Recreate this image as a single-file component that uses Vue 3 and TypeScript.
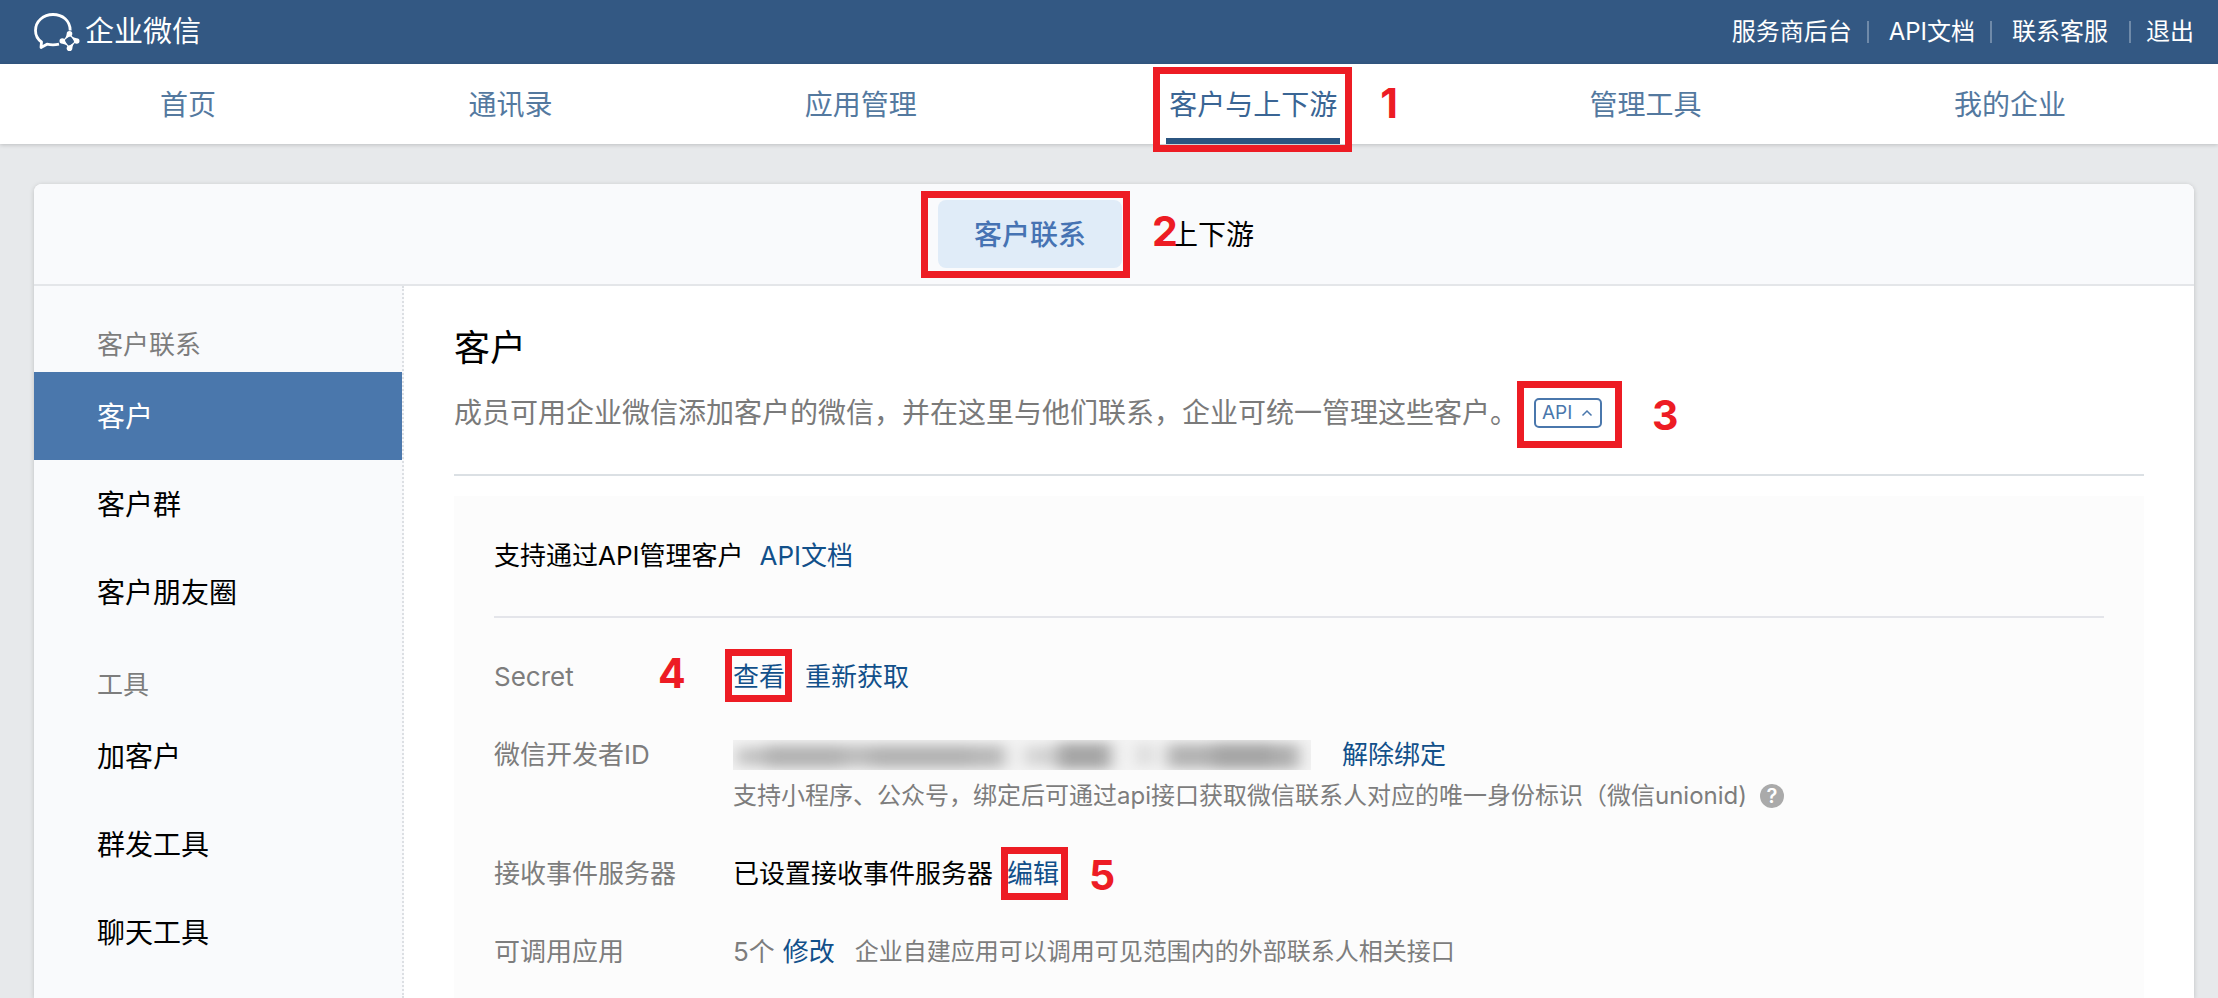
<script setup lang="ts">
interface Link {
  label: string
  active?: boolean
}

interface SideGroup {
  title: string
  items: Link[]
}

const topLinks: string[] = ['服务商后台', 'API文档', '联系客服', '退出']

const navItems: Link[] = [
  { label: '首页' },
  { label: '通讯录' },
  { label: '应用管理' },
  { label: '客户与上下游', active: true },
  { label: '管理工具' },
  { label: '我的企业' },
]

const sideGroups: SideGroup[] = [
  {
    title: '客户联系',
    items: [{ label: '客户', active: true }, { label: '客户群' }, { label: '客户朋友圈' }],
  },
  {
    title: '工具',
    items: [{ label: '加客户' }, { label: '群发工具' }, { label: '聊天工具' }],
  },
]
</script>

<template>
  <div class="page">
    <header class="topbar">
      <a class="brand" href="#">
        <svg class="brand-icon" viewBox="0 0 46 42" aria-hidden="true">
          <path
            d="M36.200 19.500C36.200 9.500 28.500 3.500 19 3.500S1.500 10 1.500 19.500C1.500 24.500 4 28.500 7.500 31L7 36.500L13 33.200C17 34 21 34 25 33.200"
            fill="none"
            stroke="#fff"
            stroke-width="2.800"
            stroke-linejoin="round"
          />
          <path d="M35.500 23.500L42 30L35.500 36.500L29 30Z" fill="none" stroke="#fff" stroke-width="1.200" />
          <g fill="#fff">
            <circle cx="35.500" cy="22.800" r="2.800" />
            <circle cx="42.700" cy="30" r="2.800" />
            <circle cx="35.500" cy="37.200" r="2.800" />
            <circle cx="28.300" cy="30" r="2.800" />
            <path d="M32.800 23L31.200 28L37 24.800Z" />
            <path d="M42.500 27.300L37.500 25.700L40.700 31.500Z" />
            <path d="M38.200 37L39.800 32L34 35.200Z" />
            <path d="M28.500 32.700L33.500 34.300L30.300 28.500Z" />
          </g>
        </svg>
        <span class="brand-name">企业微信</span>
      </a>
      <nav class="top-links" aria-label="账户">
        <a v-for="label in topLinks" :key="label" href="#">{{ label }}</a>
      </nav>
    </header>

    <nav class="main-nav" aria-label="主导航">
      <span v-for="item in navItems" :key="item.label" class="marked">
        <a href="#" class="nav-link" :class="{ active: item.active }">{{ item.label }}</a>
        <template v-if="item.active">
          <span class="frame frame-nav"></span>
          <span class="step step-nav">1</span>
        </template>
      </span>
    </nav>

    <div class="card">
      <div class="tabs">
        <span class="marked">
          <a href="#" class="tab active">客户联系</a>
          <span class="frame frame-tab"></span>
          <span class="step step-tab">2</span>
        </span>
        <a href="#" class="tab">上下游</a>
      </div>

      <div class="body">
        <aside class="side">
          <section v-for="group in sideGroups" :key="group.title" class="side-group">
            <h2 class="side-title">{{ group.title }}</h2>
            <a
              v-for="item in group.items"
              :key="item.label"
              href="#"
              class="side-link"
              :class="{ active: item.active }"
            >{{ item.label }}</a>
          </section>
        </aside>

        <main class="content">
          <div class="intro">
            <h1>客户</h1>
            <div class="intro-line">
              <p>成员可用企业微信添加客户的微信，并在这里与他们联系，企业可统一管理这些客户。</p>
              <span class="marked">
                <button type="button" class="api-button">
                  API
                  <svg class="caret" viewBox="0 0 12 8" aria-hidden="true">
                    <path d="M1.500 6.500L6 2L10.500 6.500" fill="none" stroke="currentColor" stroke-width="1.500" />
                  </svg>
                </button>
                <span class="frame frame-api"></span>
                <span class="step step-api">3</span>
              </span>
            </div>
          </div>

          <section class="panel">
            <div class="panel-head">
              <span>支持通过API管理客户</span>
              <a href="#">API文档</a>
            </div>
            <dl class="rows">
              <div class="row">
                <dt>Secret</dt>
                <dd>
                  <div class="line">
                    <span class="marked">
                      <a href="#">查看</a>
                      <span class="frame frame-view"></span>
                      <span class="step step-view">4</span>
                    </span>
                    <a href="#" class="gap-l">重新获取</a>
                  </div>
                </dd>
              </div>
              <div class="row">
                <dt>微信开发者ID</dt>
                <dd>
                  <div class="line">
                    <svg class="masked" viewBox="0 0 578 30" role="img" aria-label="已隐藏">
                      <defs>
                        <filter id="soft" x="-10%" y="-80%" width="120%" height="260%">
                          <feGaussianBlur stdDeviation="8 6" />
                        </filter>
                      </defs>
                      <rect width="578" height="30" fill="#f3f3f3" />
                      <g filter="url(#soft)" fill="#b4b4b4">
                        <rect x="4" y="7" width="30" height="19" fill="#c4c4c4" />
                        <rect x="32" y="5" width="80" height="23" />
                        <rect x="110" y="5" width="30" height="22" fill="#bebebe" />
                        <rect x="138" y="5" width="100" height="23" />
                        <rect x="238" y="5" width="34" height="23" fill="#bababa" />
                        <rect x="292" y="6" width="32" height="20" fill="#d4d4d4" />
                        <rect x="324" y="3" width="54" height="26" fill="#a6a6a6" />
                        <rect x="404" y="4" width="16" height="22" fill="#dadada" />
                        <rect x="434" y="4" width="46" height="24" />
                        <rect x="480" y="3" width="60" height="26" fill="#a6a6a6" />
                        <rect x="540" y="4" width="26" height="25" fill="#b0b0b0" />
                      </g>
                    </svg>
                    <a href="#" class="gap-xl">解除绑定</a>
                  </div>
                  <div class="line note">
                    <span>支持小程序、公众号，绑定后可通过api接口获取微信联系人对应的唯一身份标识（微信unionid)</span>
                    <button type="button" class="help" aria-label="帮助">?</button>
                  </div>
                </dd>
              </div>
              <div class="row">
                <dt>接收事件服务器</dt>
                <dd>
                  <div class="line">
                    <span>已设置接收事件服务器</span>
                    <span class="marked gap-m">
                      <a href="#">编辑</a>
                      <span class="frame frame-edit"></span>
                      <span class="step step-edit">5</span>
                    </span>
                  </div>
                </dd>
              </div>
              <div class="row">
                <dt>可调用应用</dt>
                <dd>
                  <div class="line">
                    <span class="muted">5个</span>
                    <a href="#" class="gap-s">修改</a>
                    <span class="hint gap-l">企业自建应用可以调用可见范围内的外部联系人相关接口</span>
                  </div>
                </dd>
              </div>
            </dl>
          </section>
        </main>
      </div>
    </div>
  </div>
</template>

<style>
body {
  margin: 0;
  background: #e7e9eb;
}
</style>

<style scoped>
.page {
  display: flex;
  flex-direction: column;
  min-height: 100vh;
  font-family: Inter, "Noto Sans CJK SC", sans-serif;
  font-size: 26px;
  line-height: 36px;
  color: #000;
}

.page * {
  box-sizing: border-box;
}

a {
  color: #12508a;
  text-decoration: none;
  white-space: nowrap;
}

h1,
h2,
p,
dl,
dd {
  margin: 0;
  font-weight: 400;
}

.topbar {
  display: flex;
  align-items: center;
  justify-content: space-between;
  height: 64px;
  padding: 0 24px 0 34px;
  background: #335883;
}

.brand {
  display: flex;
  align-items: center;
  gap: 5px;
  color: #fff;
}

.brand-icon {
  width: 46px;
  height: 42px;
}

.brand-name {
  font-size: 29px;
}

.top-links {
  display: flex;
  align-items: center;
  font-size: 24px;
}

.top-links a {
  display: flex;
  align-items: center;
  color: #fff;
}

.top-links a + a::before {
  content: "";
  width: 2px;
  height: 22px;
  margin: 0 20px 0 15px;
  background: #6f8aa9;
}

.top-links a:last-child::before {
  margin: 0 15px 0 21px;
}

.main-nav {
  position: relative;
  display: flex;
  justify-content: space-between;
  height: 80px;
  padding: 0 149px 0 157px;
  background: #fff;
  box-shadow: 0 1px 4px rgba(0, 0, 0, 0.18);
}

.nav-link {
  display: flex;
  align-items: center;
  height: 80px;
  padding: 0 3px;
  border-top: 8px solid transparent;
  border-bottom: 6px solid transparent;
  font-size: 28px;
  color: #54799f;
}

.nav-link.active {
  border-bottom-color: #2b5580;
  color: #3a6594;
}

.marked {
  position: relative;
  display: inline-block;
}

.frame {
  position: absolute;
  border: 7px solid #ed1c24;
  pointer-events: none;
}

.step {
  position: absolute;
  font-family: Inter, "Liberation Sans", sans-serif;
  font-size: 41px;
  font-weight: 700;
  line-height: 40px;
  color: #ed1c24;
  pointer-events: none;
}

.frame-nav {
  inset: 3px -12px -8px -13px;
}

.step-nav {
  top: 19px;
  left: 214px;
}

.frame-tab {
  inset: -9px -8px -10px -17px;
}

.step-tab {
  top: 11px;
  left: 214px;
}

.frame-api {
  inset: -17px -20px -20px -17px;
}

.step-api {
  top: -3px;
  left: 118px;
}

.frame-view {
  inset: -10px -7px -7px -8px;
}

.step-view {
  top: -6px;
  left: -75px;
}

.frame-edit {
  inset: -9px -9px -8px -6px;
}

.step-edit {
  top: -1px;
  left: 82px;
}

.card {
  display: flex;
  flex: 1;
  flex-direction: column;
  margin: 40px 24px 0 34px;
  border-radius: 8px 8px 0 0;
  background: #fff;
  box-shadow: 0 1px 5px rgba(0, 0, 0, 0.18);
}

.tabs {
  display: flex;
  align-items: center;
  justify-content: center;
  gap: 12px;
  height: 102px;
  border-bottom: 2px solid #e4e6e9;
  border-radius: 8px 8px 0 0;
  background: #f9fafc;
}

.tab {
  display: flex;
  align-items: center;
  height: 68px;
  padding: 2px 36px 0;
  border-radius: 8px;
  font-size: 28px;
  color: #000;
}

.tab.active {
  background: #e0ecf8;
  font-weight: 500;
  color: #4673b3;
}

.body {
  display: flex;
  flex: 1;
}

.side {
  flex: none;
  width: 370px;
  padding-top: 41px;
  border-right: 2px dotted #dcdfe3;
  background: #f9fafc;
}

.side-group + .side-group {
  margin-top: 31px;
}

.side-title {
  margin-bottom: 9px;
  padding-left: 63px;
  font-size: 26px;
  color: #7d7d7d;
}

.side-link {
  display: flex;
  align-items: center;
  height: 88px;
  padding: 2px 0 0 63px;
  font-size: 28px;
  color: #000;
}

.side-link.active {
  background: #4a77ac;
  color: #fff;
}

.content {
  display: flex;
  flex: 1;
  flex-direction: column;
  min-width: 0;
  padding: 37px 50px 0;
}

.intro {
  height: 153px;
  border-bottom: 2px solid #dbe0e4;
}

.intro h1 {
  font-size: 36px;
  line-height: 50px;
}

.intro-line {
  display: flex;
  align-items: center;
  gap: 16px;
  margin-top: 22px;
  font-size: 28px;
  color: #7a7a7a;
}

.api-button {
  display: flex;
  align-items: center;
  justify-content: space-between;
  width: 68px;
  height: 30px;
  padding: 0 7px 0 6px;
  border: 2px solid #4a77ac;
  border-radius: 5px;
  background: #fff;
  font-family: inherit;
  font-size: 19px;
  line-height: 26px;
  color: #4a77ac;
}

.caret {
  width: 12px;
  height: 8px;
}

.panel {
  flex: 1;
  margin-top: 20px;
  padding: 0 40px;
  background: #fcfcfc;
}

.panel-head {
  display: flex;
  align-items: center;
  gap: 16px;
  height: 122px;
  border-bottom: 2px solid #e4e5ea;
}

.rows {
  display: flex;
  flex-direction: column;
  gap: 42px;
  padding: 41px 0 26px;
}

.row {
  display: flex;
}

dt {
  flex: none;
  width: 239px;
  color: #7d7d7d;
}

.line {
  display: flex;
  align-items: center;
  height: 36px;
}

.note {
  gap: 13px;
  margin-top: 5px;
}

.note,
.hint {
  font-size: 24px;
  color: #7d7d7d;
}

.muted {
  color: #7d7d7d;
}

.gap-s {
  margin-left: 8px;
}

.gap-m {
  margin-left: 14px;
}

.gap-l {
  margin-left: 20px;
}

.gap-xl {
  margin-left: 31px;
}

.line .marked a {
  display: block;
}

.masked {
  width: 578px;
  height: 30px;
  overflow: hidden;
}

.help {
  width: 24px;
  height: 24px;
  padding: 0;
  border: 0;
  border-radius: 50%;
  background: #aaa;
  font-family: inherit;
  font-size: 20px;
  font-weight: 600;
  line-height: 24px;
  text-align: center;
  color: #fff;
}
</style>
